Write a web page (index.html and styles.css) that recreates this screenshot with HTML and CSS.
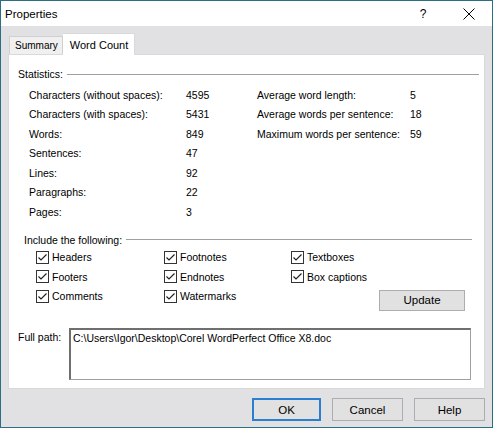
FILE: index.html
```html
<!DOCTYPE html>
<html>
<head>
<meta charset="utf-8">
<link rel="stylesheet" href="styles.css">
</head>
<body>
<div class="window">
  <div class="titlebar">
    <span class="title">Properties</span>
    <span class="help">?</span>
    <span class="close"><svg width="12" height="12" viewBox="0 0 12 12"><path d="M0.5 0.5L11.5 11.5M11.5 0.5L0.5 11.5" stroke="#000" stroke-width="1"/></svg></span>
  </div>
  <div class="body">
    <div class="tabs">
      <div class="tab">Summary</div>
      <div class="tab active">Word Count</div>
    </div>
    <div class="panel">
      <div class="group-head stats-head"><span>Statistics:</span><i></i></div>
      <div class="stats">
        <div class="col left">
          <div class="row"><span class="k">Characters (without spaces):</span><span class="v">4595</span></div>
          <div class="row"><span class="k">Characters (with spaces):</span><span class="v">5431</span></div>
          <div class="row"><span class="k">Words:</span><span class="v">849</span></div>
          <div class="row"><span class="k">Sentences:</span><span class="v">47</span></div>
          <div class="row"><span class="k">Lines:</span><span class="v">92</span></div>
          <div class="row"><span class="k">Paragraphs:</span><span class="v">22</span></div>
          <div class="row"><span class="k">Pages:</span><span class="v">3</span></div>
        </div>
        <div class="col right">
          <div class="row"><span class="k">Average word length:</span><span class="v">5</span></div>
          <div class="row"><span class="k">Average words per sentence:</span><span class="v">18</span></div>
          <div class="row"><span class="k">Maximum words per sentence:</span><span class="v">59</span></div>
        </div>
      </div>
      <div class="group-head incl-head"><span>Include the following:</span><i></i></div>
      <div class="checks">
        <label class="cb"><b></b>Headers</label>
        <label class="cb"><b></b>Footnotes</label>
        <label class="cb"><b></b>Textboxes</label>
        <label class="cb"><b></b>Footers</label>
        <label class="cb"><b></b>Endnotes</label>
        <label class="cb"><b></b>Box captions</label>
        <label class="cb"><b></b>Comments</label>
        <label class="cb"><b></b>Watermarks</label>
        <div class="update-cell"><button class="btn update">Update</button></div>
      </div>
      <div class="path">
        <span class="path-label">Full path:</span>
        <div class="path-box">C:\Users\Igor\Desktop\Corel WordPerfect Office X8.doc</div>
      </div>
    </div>
    <div class="footer">
      <button class="btn ok">OK</button>
      <button class="btn">Cancel</button>
      <button class="btn">Help</button>
    </div>
  </div>
</div>
</body>
</html>
```
FILE: styles.css
```css
* { box-sizing: border-box; }
html, body { margin: 0; padding: 0; }
body {
  font-family: "Liberation Sans", Arial, sans-serif;
  font-size: 10.5px;
  color: #000;
  width: 493px;
  height: 428px;
  overflow: hidden;
}
.window {
  width: 493px;
  height: 428px;
  border: 1px solid #2c6e86;
  display: flex;
  flex-direction: column;
  background: #e1e1e3;
}
.titlebar {
  height: 25px;
  background: #fff;
  display: flex;
  align-items: center;
  padding-left: 4px;
  flex: none;
}
.title { font-size: 11.5px; flex: 1; }
.help { font-size: 12px; width: 46px; text-align: center; }
.close { width: 46px; display: flex; justify-content: center; align-items: center; }
.body {
  flex: 1;
  display: flex;
  flex-direction: column;
  padding: 7px 7px 0 7px;
}
.tabs {
  display: flex;
  align-items: flex-end;
  height: 21px;
  padding-left: 1px;
  position: relative;
  z-index: 1;
}
.tab {
  height: 18px;
  padding: 0 4px 0 5px;
  border: 1px solid #d0d0d0;
  border-bottom: none;
  background: #f0f0f0;
  display: flex;
  align-items: center;
  font-size: 10px;
}
.tab.active {
  height: 22px;
  background: #fff;
  border-color: #d9d9d9;
  margin-bottom: -1px;
  padding: 0 6px 0 7px;
  font-size: 11px;
  border-left: none;
}
.panel {
  height: 335px;
  background: #fff;
  border: 1px solid #d9d9d9;
  width: 477px;
  padding: 12px 0 0 9px;
}
.group-head {
  display: flex;
  align-items: center;
  gap: 4px;
  height: 14px;
}
.group-head i {
  flex: 1;
  height: 1px;
  background: #a0a0a0;
  display: block;
}
.stats-head { margin-right: 5px; }
.stats {
  display: flex;
  padding-left: 11px;
  margin-top: 4px;
}
.col { display: flex; flex-direction: column; }
.col.left { width: 228px; }
.row { display: flex; height: 19.5px; align-items: center; }
.left .k { width: 157px; }
.right .k { width: 153px; }
.group-head.incl-head { margin-top: 11px; padding-left: 6px; margin-right: 12px; }
.checks {
  display: grid;
  grid-template-columns: 128px 127px 1fr;
  grid-auto-rows: 19.5px;
  padding-left: 18px;
  margin-top: 1px;
}
.cb {
  display: flex;
  align-items: center;
  gap: 3px;
}
.cb b {
  width: 13px;
  height: 13px;
  border: 1px solid #333;
  background: #fff url("data:image/svg+xml,%3Csvg xmlns='http://www.w3.org/2000/svg' width='11' height='11'%3E%3Cpath d='M1.5 5.5L4 8L9.5 2.5' fill='none' stroke='%23222' stroke-width='1.2'/%3E%3C/svg%3E") no-repeat center;
  display: block;
  flex: none;
}
.update-cell {
  grid-column: 3;
  display: flex;
  justify-content: flex-end;
  padding-right: 19px;
  align-items: flex-start;
  padding-top: 3px;
}
.btn {
  font-family: "Liberation Sans", Arial, sans-serif;
  font-size: 11.5px;
  background: #e1e1e1;
  border: 1px solid #adadad;
  color: #000;
  padding: 0;
}
.update { width: 86px; height: 21px; }
.path {
  display: flex;
  margin-top: 22px;
}
.path-label { width: 51px; padding-top: 3px; }
.path-box {
  width: 402px;
  height: 52px;
  border: 1px solid #a0a0a0;
  border-top: 2px solid #6f6f6f;
  border-left: 2px solid #6f6f6f;
  padding: 2px 2px;
  font-size: 10.5px;
}
.footer {
  display: flex;
  justify-content: flex-end;
  gap: 11px;
  padding: 9px 0 0 0;
}
.footer .btn { width: 71px; height: 23px; }
.footer .ok { border: 2px solid #2b7fd0; width: 69px; }
```
